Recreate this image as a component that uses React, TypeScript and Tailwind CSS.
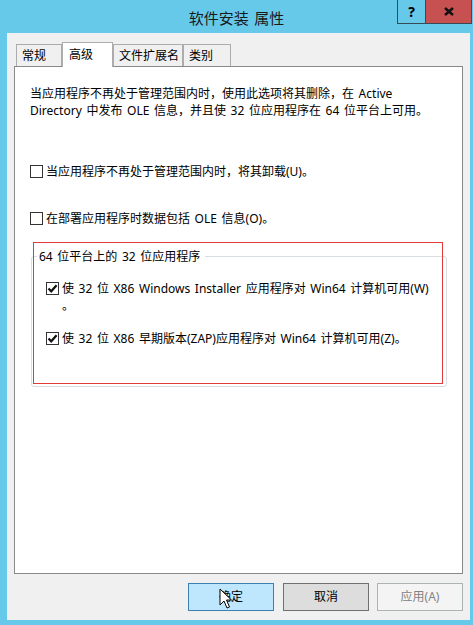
import React from "react";

const font = "font-['Noto_Sans','Noto_Sans_CJK_SC',sans-serif]";

const Check = ({ checked }: { checked?: boolean }) => (
  <span className="w-[13px] h-[13px] shrink-0 border border-[#333333] bg-white flex items-center justify-center">
    {checked && (
      <svg width="11" height="11" viewBox="0 0 11 11">
        <path d="M1.5 5.5 L4.2 8.3 L9.6 2.2" fill="none" stroke="#111" strokeWidth="2.2" />
      </svg>
    )}
  </span>
);

const Tab = ({ label, w, active }: { label: string; w: string; active?: boolean }) => (
  <div
    className={
      active
        ? `${w} h-[25px] -mb-px relative z-10 bg-white border border-b-0 border-[#acacac] pl-[6px] flex items-center`
        : `${w} h-[22px] bg-[#f0f0f0] border border-b-0 border-[#acacac] pl-[5px] flex items-center`
    }
  >
    {label}
  </div>
);

const App = () => {
  return (
    <div className={`w-[473px] h-[625px] bg-[#67c9ea] relative flex flex-col text-[12px] text-black [word-spacing:1.5px] ${font}`}>
      {/* title bar */}
      <div className="h-[33px] flex items-center justify-center pt-[3px] text-[15px] text-[#1a1a1a]">
        软件安装 属性
      </div>
      <div className="absolute top-0 left-[397px] flex">
        <div className="w-[29px] h-[24px] border border-t-0 border-[#3a4a52] flex items-center justify-center font-bold text-[14px] leading-none">
          ?
        </div>
        <div className="w-[46px] h-[24px] bg-[#c75050] border border-t-0 border-l-0 border-[#3a4a52] flex items-center justify-center">
          <svg width="10" height="9" viewBox="0 0 10 9">
            <path d="M1 1 L9 8 M9 1 L1 8" stroke="#111" strokeWidth="2.4" />
          </svg>
        </div>
      </div>

      {/* client */}
      <div className="ml-[7px] w-[463px] h-[587px] bg-[#f0f0f0] pt-[9px] px-[7px] flex flex-col">
        <div className="flex items-end h-[24px] pl-[2px]">
          <Tab label="常规" w="w-[46px]" />
          <Tab label="高级" w="w-[51px]" active />
          <Tab label="文件扩展名" w="w-[70px]" />
          <Tab label="类别" w="w-[48px]" />
        </div>

        <div className="h-[508px] border border-[#8a8a8a] bg-white pt-[18px] pl-[15px] leading-[17px]">
          <p>
            当应用程序不再处于管理范围内时，使用此选项将其删除，在 Active
            <br />
            Directory 中发布 OLE 信息，并且使 32 位应用程序在 64 位平台上可用。
          </p>

          <label className="mt-[44px] flex items-center gap-[3px]">
            <Check />
            <span>当应用程序不再处于管理范围内时，将其卸载(U)。</span>
          </label>
          <label className="mt-[30px] flex items-center gap-[3px]">
            <Check />
            <span>在部署应用程序时数据包括 OLE 信息(O)。</span>
          </label>

          <fieldset className="mt-[21px] ml-[1px] w-[416px] border border-[#d8dde2] rounded-[3px] pb-[39px]">
            <legend className="ml-[5px] pl-[2px] pr-[5px]">64 位平台上的 32 位应用程序</legend>
            <div className="pl-[14px]">
              <div className="mt-[15px] flex items-start gap-[3px]">
                <span className="h-[17px] flex items-center">
                  <Check checked />
                </span>
                <span>
                  使 32 位 X86 Windows Installer 应用程序对 Win64 计算机可用(W)
                  <br />。
                </span>
              </div>
              <div className="mt-[16px] flex items-center gap-[3px]">
                <Check checked />
                <span>使 32 位 X86 早期版本(ZAP)应用程序对 Win64 计算机可用(Z)。</span>
              </div>
            </div>
          </fieldset>
        </div>

        <div className="mt-[9px] flex justify-end">
          <button className="w-[86px] h-[28px] bg-[#bee6fd] border border-[#3c7fb1] flex items-center justify-center">
            确定
          </button>
          <button className="ml-[9px] w-[86px] h-[28px] bg-[#dddddd] border border-[#707070] flex items-center justify-center">
            取消
          </button>
          <button className="ml-[8px] w-[86px] h-[28px] bg-[#f4f4f4] border border-[#adb2b5] text-[#838383] flex items-center justify-center">
            应用(A)
          </button>
        </div>
      </div>

      {/* red highlight annotation */}
      <div className="absolute left-[33px] top-[242px] w-[410px] h-[142px] border border-[#e03a3a] pointer-events-none" />

      {/* mouse cursor */}
      <svg className="absolute left-[219px] top-[588px]" width="14" height="22" viewBox="0 0 14 22">
        <path d="M1 1 L1 17 L5 13 L8 20 L10.5 19 L7.5 12 L12.5 12 Z" fill="#fff" stroke="#000" strokeWidth="1" strokeLinejoin="miter" />
      </svg>
    </div>
  );
};

export default App;
